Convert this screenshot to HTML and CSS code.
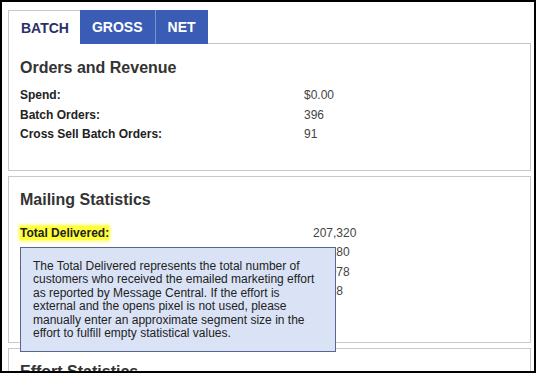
FILE: index.html
```html
<!DOCTYPE html>
<html lang="en">
<head>
    <meta charset="UTF-8">
    <title>Effort Report - Batch</title>
    <link rel="stylesheet" href="styles.css">
</head>
<body>
    <div class="frame">
        <div class="tabs">
            <a class="tab active" href="#">BATCH</a>
            <a class="tab" href="#">GROSS</a>
            <a class="tab" href="#">NET</a>
            <div class="tab-rest"></div>
        </div>

        <div class="panel first">
            <h2>Orders and Revenue</h2>
            <div class="stats">
                <span class="label">Spend:</span><span class="value">$0.00</span>
                <span class="label">Batch Orders:</span><span class="value">396</span>
                <span class="label">Cross Sell Batch Orders:</span><span class="value">91</span>
            </div>
        </div>

        <div class="panel mailing">
            <h2>Mailing Statistics</h2>
            <div class="stats wide">
                <span class="label has-tip"><span class="mark">Total Delivered:</span>
                    <span class="tooltip">The Total Delivered represents the total number of customers who received the emailed marketing effort as reported by Message Central. If the effort is external and the opens pixel is not used, please manually enter an approximate segment size in the effort to fulfill empty statistical values.</span>
                </span><span class="value">207,320</span>
                <span class="label">Unique Opens:</span><span class="value">23,180</span>
                <span class="label">Total Opens:</span><span class="value">31,078</span>
                <span class="label">Unique Clicks:</span><span class="value">4,518</span>
            </div>
        </div>

        <div class="panel">
            <h2>Effort Statistics</h2>
        </div>
    </div>
</body>
</html>
```

FILE: styles.css
```css
html, body {
    margin: 0;
    padding: 0;
    background: #fff;
}
body {
    font-family: "Liberation Sans", Arial, sans-serif;
    font-size: 12px;
    color: #222;
}
.frame {
    box-sizing: border-box;
    height: 373px;
    border: 2px solid #000;
    padding: 8px 3px 0 6px;
    overflow: hidden;
}
.tabs {
    display: flex;
    height: 34px;
}
.tab {
    display: flex;
    align-items: center;
    padding: 0 12px;
    font-size: 14px;
    font-weight: bold;
    text-decoration: none;
    color: #fff;
    background-color: #3a5cb4;
}
.tab + .tab {
    border-left: 1px solid #7d93cc;
}
.tab.active {
    color: #2b2f68;
    background-color: #fff;
    border-left: 1px solid #c8c8c8;
    border-top: 1px solid #c8c8c8;
    padding-right: 11px;
}
.tab.active + .tab {
    border-left: none;
}
.tab-rest {
    flex: 1;
    border-bottom: 1px solid #c4c4c4;
}
.panel {
    margin-top: 5px;
    padding: 13px 11px 21px;
    border: 1px solid #c8c8c8;
}
.panel.first {
    margin-top: 0;
    border-top: none;
    padding-top: 14px;
    padding-bottom: 25px;
}
.panel.mailing {
    padding-bottom: 40px;
}
.panel h2 {
    margin: 0 0 14px;
    font-size: 16px;
    line-height: 20px;
    color: #333;
}
.panel.first h2 {
    margin-bottom: 8px;
}
.stats {
    display: grid;
    grid-template-columns: 284px auto;
    line-height: 19.5px;
}
.stats.wide {
    grid-template-columns: 293px auto;
}
.stats .label {
    font-weight: bold;
    color: #222;
}
.stats .value {
    color: #444;
}
.has-tip {
    position: relative;
}
.mark {
    background-color: #ffff3a;
    box-shadow: 0 0 3px 1px #ffff3a;
}
.tooltip {
    position: absolute;
    left: 0;
    top: 23px;
    z-index: 2;
    width: 286px;
    padding: 12px 16px 10px 12px;
    background-color: #dae3f6;
    border: 1px solid #56668f;
    font-weight: normal;
    line-height: 13.6px;
    color: #222;
}
```
